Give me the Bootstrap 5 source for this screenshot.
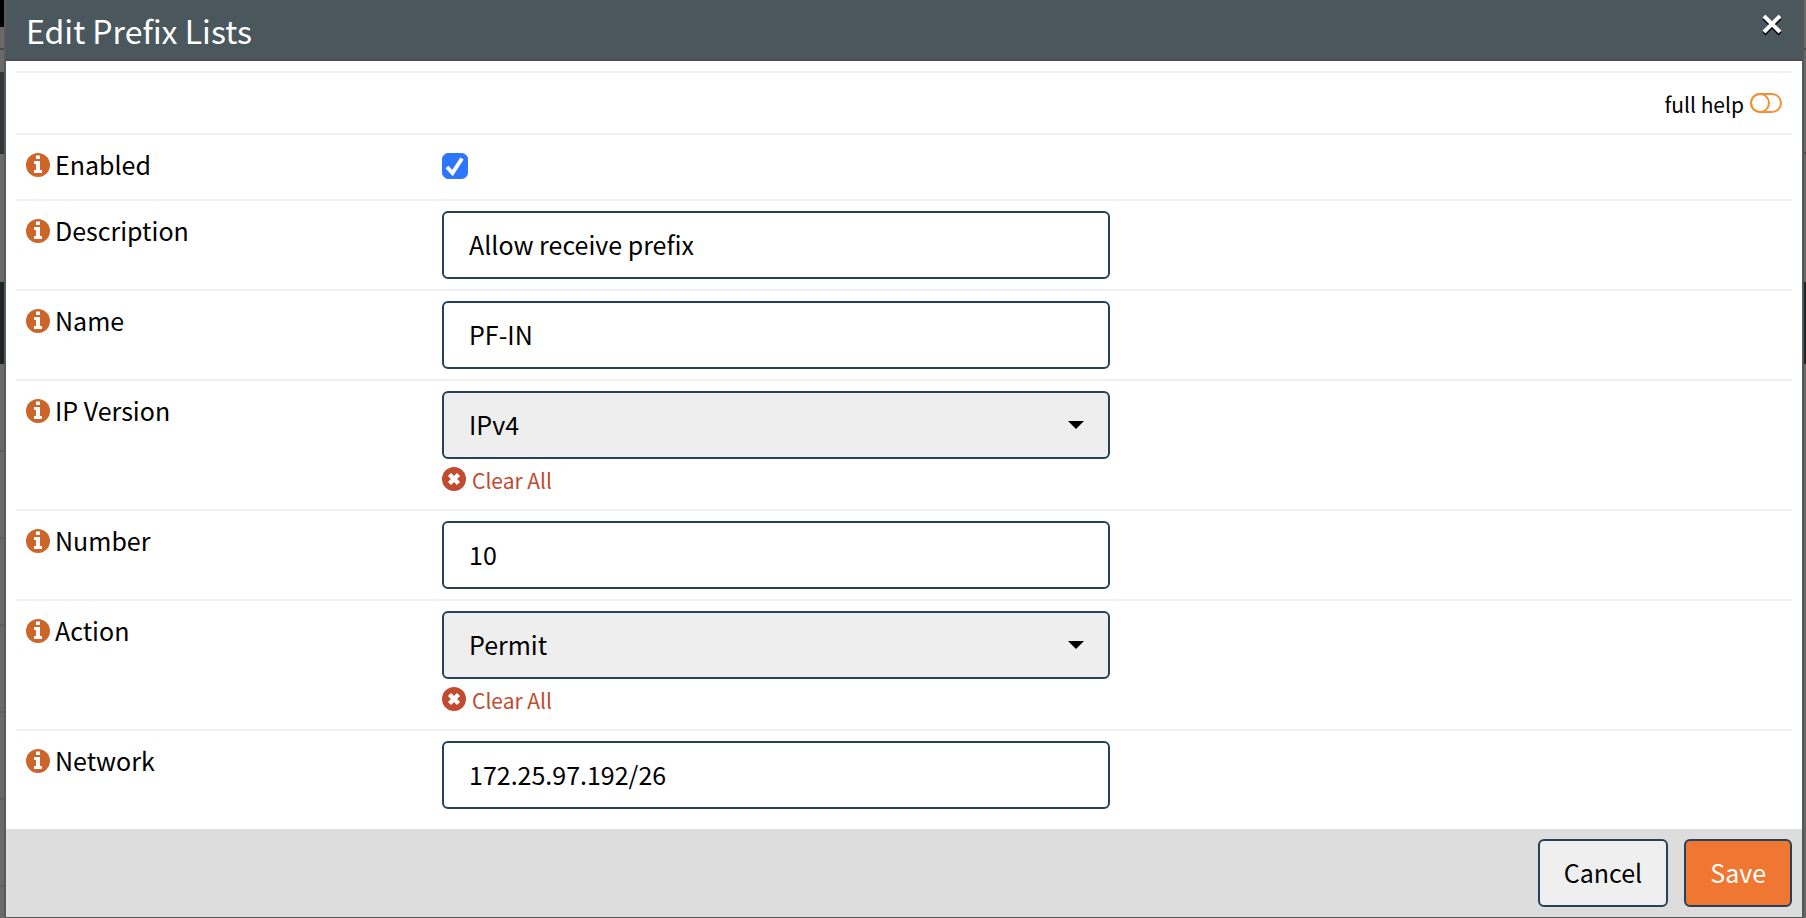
<!DOCTYPE html>
<html lang="en">
<head>
<meta charset="utf-8">
<meta name="viewport" content="width=device-width, initial-scale=1">
<title>Edit Prefix Lists</title>
<link href="https://cdn.jsdelivr.net/npm/bootstrap@5.3.0/dist/css/bootstrap.min.css" rel="stylesheet">
<style>
  body { font-family: "Noto Sans CJK SC", "Noto Sans", sans-serif; font-size: 25px; line-height: 30px; color: #000; background: #666; min-height: 100vh; }
  .backdrop-edge { width: 6px; background: linear-gradient(90deg, #6a6a6a 4px, #5a5a5a 4px); }
  .backdrop-edge.end-edge { width: 4px; background: linear-gradient(90deg, #565858 2px, #666868 2px); }
  .edge-text { height: 27px; background: #000; }
  .edge-rule { height: 2px; background: #4c4c4c; margin-top: 21px; }
  .edge-tab { height: 82px; background: #31363a; margin-top: 22px; }
  .edge-dark { height: 82px; background: #1e2529; margin-top: 128px; }
  .edge-rows { height: 500px; margin-top: 86px; background: repeating-linear-gradient(#606060 0 2px, transparent 2px 87px); }
  .edge-text, .edge-rule, .edge-tab, .edge-dark, .edge-rows { width: 4px; }
  .end-edge > * { width: 2px; margin-left: auto; }
  .end-edge .edge-rule { margin-top: 48px; }
  .end-edge .edge-rule + .edge-rule { margin-top: 102px; }
  .end-edge .edge-dark { margin-top: 128px; }
  .dialog-head { background: #4a585e; border-bottom: 2px solid #4a4a4a; color: #fff; height: 61px; padding: 0 20px; }
  .dialog-title { font-size: 32px; line-height: 48px; font-weight: 400; padding-top: 6px; }
  .close-btn { line-height: 0; margin-top: 15px; }
  .dialog-body { padding: 10px 10px; background: #fff; }
  .help-row { border-top: 2px solid #efefef; height: 62px; font-size: 21px; padding: 12px 10px 10px; }
  .help-row a { gap: 6px; }
  .help-row svg { margin-bottom: 2px; }
  .form-line { border-top: 2px solid #efefef; display: grid; grid-template-columns: 26fr 43fr 42fr; padding: 10px 0; }
  .form-line > * { padding: 0 10px; }
  .field-name { gap: 5px; height: 36px; margin-top: 4px; }
  .field-name svg { margin-top: 4px; }
  .check-line { height: 44px; }
  .opn-input { height: 68px; font-size: 25px; color: #000; border: 2px solid #26425a; border-radius: 6px; padding: 0 25px 2px; }
  select.opn-input { padding-bottom: 0; background-color: #eee; background-position: right 24px center; background-size: 16px 8px; background-image: url("data:image/svg+xml,%3Csvg xmlns='http://www.w3.org/2000/svg' viewBox='0 0 16 8'%3E%3Cpath d='M0 0h16L8 8z'/%3E%3C/svg%3E"); }
  .opn-check { width: 26px; height: 26px; margin: 8px 0; border-radius: 3px; }
  .opn-check:checked { background-color: #2b76fa; border-color: #2b76fa; background-size: 24px; background-image: url("data:image/svg+xml,%3Csvg xmlns='http://www.w3.org/2000/svg' viewBox='0 0 24 24'%3E%3Cpath d='M4 13l5.500 6L19 4.500' fill='none' stroke='%23fff' stroke-width='4'/%3E%3C/svg%3E"); }
  .clear-link { color: #c04b30; font-size: 21px; line-height: 26px; height: 32px; gap: 6px; margin-top: 8px; }
  .dialog-foot { background: #ddd; padding: 10px; gap: 16px; border-bottom: 1px solid #555; height: 89px; }
  .opn-btn { height: 68px; font-size: 25px; border: 2px solid #26425a; border-radius: 6px; padding: 0 24px; color: #000; background: #efefef; }
  .opn-btn.save { background: #f07732; color: #fff; }
</style>
</head>
<body class="d-flex">
<svg class="d-none" aria-hidden="true">
  <symbol id="info" viewBox="0 0 24 24"><circle cx="12" cy="12" r="12" fill="#cb652a"/><path fill="#fff" d="M10 2.500h4V6h-4zM8 8h6v9h2v3H8v-3h2v-6H8z"/></symbol>
  <symbol id="times" viewBox="0 0 24 24"><circle cx="12" cy="12" r="12" fill="#c04b30"/><path d="M7.500 7.500l9 9m0-9l-9 9" stroke="#fff" stroke-width="4.500"/></symbol>
</svg>
<div class="backdrop-edge flex-shrink-0" aria-hidden="true"><div class="edge-text"></div><div class="edge-rule"></div><div class="edge-tab"></div><div class="edge-dark"></div><div class="edge-rows"></div></div>
<main class="flex-grow-1">
  <header class="dialog-head d-flex justify-content-between align-items-start">
    <h1 class="dialog-title m-0">Edit Prefix Lists</h1>
    <button type="button" class="close-btn btn p-0 border-0" aria-label="Close"><svg width="20" height="21" viewBox="0 0 20 21"><path d="M2 3l16 16M18 3L2 19" stroke="#000" stroke-width="4"/><path d="M2 1l16 16M18 1L2 17" stroke="#fff" stroke-width="4"/></svg></button>
  </header>
  <form>
    <div class="dialog-body">
      <div class="help-row d-flex justify-content-end align-items-center">
        <a href="#" class="d-flex align-items-center text-reset text-decoration-none">full help <svg width="32" height="20" viewBox="0 0 32 20" fill="none" stroke="#f19135" stroke-width="2"><rect x="1" y="1" width="30" height="18" rx="9"/><circle cx="10" cy="10" r="9"/></svg></a>
      </div>
      <div class="form-line">
        <label class="field-name d-flex" for="enabled"><svg width="24" height="24"><use href="#info"/></svg>Enabled</label>
        <div class="check-line"><input class="form-check-input opn-check" type="checkbox" id="enabled" checked></div>
      </div>
      <div class="form-line">
        <label class="field-name d-flex" for="description"><svg width="24" height="24"><use href="#info"/></svg>Description</label>
        <div><input class="form-control opn-input" type="text" id="description" value="Allow receive prefix"></div>
      </div>
      <div class="form-line">
        <label class="field-name d-flex" for="name"><svg width="24" height="24"><use href="#info"/></svg>Name</label>
        <div><input class="form-control opn-input" type="text" id="name" value="PF-IN"></div>
      </div>
      <div class="form-line">
        <label class="field-name d-flex" for="version"><svg width="24" height="24"><use href="#info"/></svg>IP Version</label>
        <div><select class="form-select opn-input" id="version"><option>IPv4</option></select>
          <a href="#" class="clear-link d-flex text-decoration-none"><svg width="24" height="24"><use href="#times"/></svg>Clear All</a></div>
      </div>
      <div class="form-line">
        <label class="field-name d-flex" for="number"><svg width="24" height="24"><use href="#info"/></svg>Number</label>
        <div><input class="form-control opn-input" type="text" id="number" value="10"></div>
      </div>
      <div class="form-line">
        <label class="field-name d-flex" for="action"><svg width="24" height="24"><use href="#info"/></svg>Action</label>
        <div><select class="form-select opn-input" id="action"><option>Permit</option></select>
          <a href="#" class="clear-link d-flex text-decoration-none"><svg width="24" height="24"><use href="#times"/></svg>Clear All</a></div>
      </div>
      <div class="form-line">
        <label class="field-name d-flex" for="network"><svg width="24" height="24"><use href="#info"/></svg>Network</label>
        <div><input class="form-control opn-input" type="text" id="network" value="172.25.97.192/26"></div>
      </div>
    </div>
    <footer class="dialog-foot d-flex justify-content-end">
      <button type="button" class="btn opn-btn">Cancel</button>
      <button type="submit" class="btn opn-btn save">Save</button>
    </footer>
  </form>
</main>
<div class="backdrop-edge end-edge flex-shrink-0" aria-hidden="true"><div class="edge-rule"></div><div class="edge-rule"></div><div class="edge-dark"></div></div>
<script src="https://cdn.jsdelivr.net/npm/bootstrap@5.3.0/dist/js/bootstrap.bundle.min.js"></script>
</body>
</html>
